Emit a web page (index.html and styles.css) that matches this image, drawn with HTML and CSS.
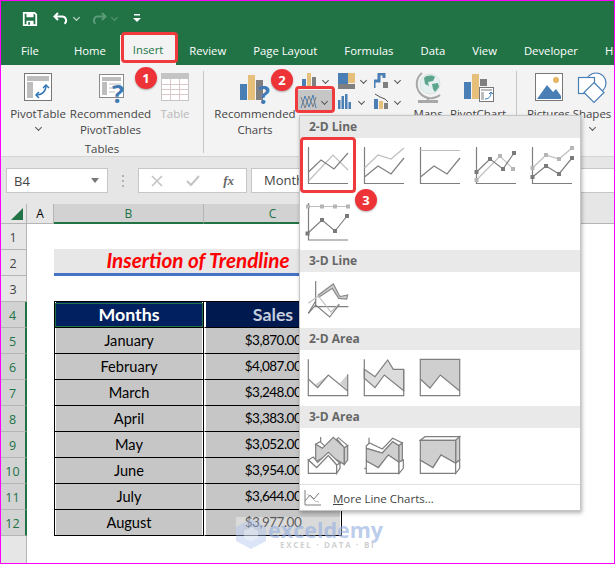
FILE: index.html
```html
<!DOCTYPE html>
<html lang="en">
<head>
  <meta charset="UTF-8" />
  <title>Insert Line Chart - Excel</title>
  <link rel="stylesheet" href="styles.css">
</head>
<body>
  <!-- title bar and tabs -->
  <header class="titlebar">
    <div class="qat">
      <svg class="qat-save" width="16" height="16" viewBox="0 0 18 18"><path d="M2 2h12l2 2v12H2z" fill="none" stroke="#fff" stroke-width="2"/><rect x="5" y="2" width="8" height="5" fill="#fff"/><rect x="5" y="11" width="8" height="5" fill="#fff"/><rect x="7" y="12.500" width="2" height="3" fill="#217346"/></svg>
      <svg class="qat-undo" width="16" height="16" viewBox="0 0 16 16"><path d="M5 2 1.500 5.500 5 9M2 5.500h7a4 4 0 0 1 2.500 7.200" fill="none" stroke="#fff" stroke-width="2"/></svg>
      <span class="chev chev-white qat-chev"></span>
      <svg class="qat-redo" width="16" height="16" viewBox="0 0 16 16"><path d="M11 2l3.500 3.500L11 9M14 5.500H7a4 4 0 0 0-2.500 7.200" fill="none" stroke="#5b9a78" stroke-width="2"/></svg>
      <span class="chev chev-dim qat-chev"></span>
      <svg class="qat-more" width="8" height="9" viewBox="0 0 8 9"><rect x="1" y="0" width="6" height="1.500" fill="#fff"/><path d="M0 4h8L4 8z" fill="#fff"/></svg>
    </div>
    <nav class="tabs">
      <span class="tab tab-file">File</span>
      <span class="tab">Home</span>
      <span class="tab tab-active">Insert</span>
      <span class="tab">Review</span>
      <span class="tab">Page Layout</span>
      <span class="tab">Formulas</span>
      <span class="tab">Data</span>
      <span class="tab">View</span>
      <span class="tab">Developer</span>
      <span class="tab">H</span>
    </nav>
  </header>

  <!-- ribbon -->
  <section class="ribbon">
    <div class="group group-tables">
      <div class="btn btn-pivot">
        <svg class="big" width="28" height="28" viewBox="0 0 28 28"><rect x=".5" y=".5" width="27" height="27" fill="#fff" stroke="#777"/><rect x="3" y="3" width="22" height="5" fill="#bdbdbd"/><rect x="3" y="9" width="6" height="16" fill="#bdbdbd"/><path d="M13 22c5 0 9-4 9-9" fill="none" stroke="#2f75b5" stroke-width="1.500"/><path d="M19 15l3-3 3 3M15 19l-3 3 3 3" fill="none" stroke="#2f75b5" stroke-width="1.500"/></svg>
        <span>PivotTable</span>
        <span class="chev btn-chev"></span>
      </div>
      <div class="btn btn-recpivot">
        <svg class="big" width="30" height="30" viewBox="0 0 30 30"><rect x=".5" y=".5" width="24" height="23" fill="#fff" stroke="#8a8a8a"/><rect x="3" y="3" width="19" height="4" fill="#bdbdbd"/><rect x="3" y="8" width="5" height="13" fill="#bdbdbd"/><path d="M10 10h12M10 14h8M10 18h6" stroke="#bdbdbd"/><text x="13" y="29" class="qmark">?</text></svg>
        <span>Recommended</span>
        <span>PivotTables</span>
      </div>
      <div class="btn btn-table">
        <svg class="big" width="28" height="28" viewBox="0 0 28 28"><rect x=".5" y=".5" width="27" height="27" fill="#fff" stroke="#c4c4c4"/><rect x="1" y="1" width="26" height="5" fill="#c4c4c4"/><path d="M1 11.500h26M1 16.500h26M1 21.500h26M9.500 6v21M18.500 6v21" stroke="#dcc8c8"/></svg>
        <span class="disabled">Table</span>
      </div>
      <div class="group-label">Tables</div>
    </div>

    <div class="group group-charts">
      <div class="btn btn-reccharts">
        <svg class="big" width="36" height="30" viewBox="0 0 36 30"><rect x="0" y="10" width="7" height="16" fill="#4a7fb5"/><rect x="8" y="1" width="7" height="25" fill="#e6c07b"/><rect x="16" y="6" width="7" height="20" fill="#7f7f7f"/><text x="18" y="30" class="qmark">?</text></svg>
        <span>Recommended</span>
        <span>Charts</span>
      </div>
      <div class="mini-grid">
        <div class="mini"><svg width="15" height="15" viewBox="0 0 15 15"><rect x="0" y="6" width="4" height="9" fill="#4a7fb5"/><rect x="5" y="0" width="4" height="15" fill="#e6c07b"/><rect x="10" y="4" width="4" height="11" fill="#7f7f7f"/></svg><span class="chev"></span></div>
        <div class="mini"><svg width="17" height="16" viewBox="0 0 17 16"><rect x="0" y="0" width="10" height="16" fill="#4a7fb5"/><rect x="10" y="0" width="7" height="10" fill="#e6c07b"/><rect x="0" y="11" width="17" height="5" fill="#7f7f7f"/></svg><span class="chev"></span></div>
        <div class="mini"><svg width="15" height="15" viewBox="0 0 15 15"><path d="M0 15V8h5V1h5v4" fill="none" stroke="#4a7fb5" stroke-width="3"/><rect x="9" y="9" width="5" height="6" fill="#7f7f7f"/></svg><span class="chev"></span></div>
        <div class="mini mini-line"><svg width="17" height="15" viewBox="0 0 17 15"><path d="M1 14 5 2l4 11 4-12 3 13" fill="none" stroke="#4a7fb5"/><path d="M1 3l4 11 4-12 4 11 3-10" fill="none" stroke="#7f7f7f"/></svg><span class="chev"></span></div>
        <div class="mini"><svg width="15" height="15" viewBox="0 0 15 15"><rect x="0" y="6" width="2.500" height="9" fill="#4a7fb5"/><rect x="3.500" y="2" width="2.500" height="13" fill="#4a7fb5"/><rect x="7" y="0" width="2.500" height="15" fill="#4a7fb5"/><rect x="10.500" y="8" width="2.500" height="7" fill="#4a7fb5"/></svg><span class="chev"></span></div>
        <div class="mini"><svg width="15" height="16" viewBox="0 0 15 16"><rect x="0" y="6" width="4" height="10" fill="#4a7fb5"/><rect x="5" y="8" width="4" height="8" fill="#e6c07b"/><rect x="10" y="10" width="4" height="6" fill="#7f7f7f"/><path d="M1 1l5 3 5 2 3 3" fill="none" stroke="#555"/></svg><span class="chev"></span></div>
      </div>
      <div class="btn btn-maps">
        <svg class="big" width="28" height="41" viewBox="0 0 28 41"><circle cx="16" cy="12" r="10" fill="#e6efef" stroke="#c9d6d6" stroke-width=".6"/><path d="M10 6c3-3 8-3 11-1l-2 4-5 1 1 4-4-2zM18 12l6-1 1 4-4 5-2-3z" fill="#5ba58c"/><path d="M8 1A14 14 0 0 0 26 23" fill="none" stroke="#a8a8a8" stroke-width="2"/><path d="M14 25v3" stroke="#a8a8a8" stroke-width="2"/><rect x="4" y="28" width="20" height="3" fill="#a8a8a8"/></svg>
        <span>Maps</span>
      </div>
      <div class="btn btn-pivotchart">
        <svg class="big" width="32" height="28" viewBox="0 0 32 28"><rect x="2" y="8" width="7" height="17" fill="#4a7fb5"/><rect x="10" y="0" width="7" height="25" fill="#e6c07b"/><rect x="18" y="5" width="7" height="7" fill="#7f7f7f"/><rect x="17.500" y="13.500" width="14" height="14" fill="#fff" stroke="#777"/><rect x="19" y="15" width="11" height="2" fill="#bdbdbd"/><rect x="19" y="18" width="3" height="8" fill="#bdbdbd"/><path d="M23 25c3 0 6-2 6-6M27 20l2-2 2 2" fill="none" stroke="#2f75b5"/></svg>
        <span>PivotChart</span>
      </div>
    </div>

    <div class="group group-illus">
      <div class="btn btn-pictures">
        <svg class="big" width="28" height="28" viewBox="0 0 28 28"><rect x=".5" y=".5" width="27" height="27" fill="#fff" stroke="#777"/><circle cx="21" cy="7" r="3" fill="#e6b566"/><path d="M2 26 12 12l6 7 3-3 5 7v3z" fill="#4a7fb5"/></svg>
        <span>Pictures</span>
      </div>
      <div class="btn btn-shapes">
        <svg class="big" width="32" height="32" viewBox="0 0 32 32"><circle cx="20" cy="11" r="10" fill="#fff" stroke="#4a7fb5" stroke-width="1.200"/><rect x="2.500" y="5.500" width="16" height="16" fill="#fff" stroke="#4a7fb5" stroke-width="1.200"/><path d="M18 10.500l10 10-10 10-10-10z" fill="#fff" stroke="#4a7fb5" stroke-width="1.200"/></svg>
        <span>Shapes</span>
        <span class="chev btn-chev"></span>
      </div>
    </div>
  </section>

  <!-- formula bar -->
  <section class="formula">
    <div class="namebox"><span>B4</span><i class="tri"></i></div>
    <div class="dots"></div>
    <div class="fx-btns">
      <svg width="12" height="12" viewBox="0 0 12 12"><path d="M1 1l10 10M11 1 1 11" stroke="#c4c4c4" stroke-width="1.600"/></svg>
      <svg width="14" height="12" viewBox="0 0 14 12"><path d="M1 6l4 4 8-9" fill="none" stroke="#c4c4c4" stroke-width="2"/></svg>
      <span class="fx">fx</span>
    </div>
    <div class="fx-input">Months</div>
  </section>

  <!-- sheet -->
  <main class="sheet">
    <div class="corner"><i class="corner-tri"></i></div>
    <div class="col">A</div>
    <div class="col col-sel">B</div>
    <div class="col col-sel col-c">C</div>
    <div class="col-rest"></div>

    <div class="row-no">1</div><div class="span-row"></div>

    <div class="row-no">2</div><div></div>
    <div class="title-cell">Insertion of Trendline</div><div></div>

    <div class="row-no">3</div><div></div><div class="above"></div><div class="above"></div><div></div>

    <div class="row-no sel">4</div><div></div>
    <div class="cell b head active">Months</div><div class="cell c head head-c">Sales</div><div></div>

    <div class="row-no sel">5</div><div></div><div class="cell b">January</div><div class="cell c">$3,870.00</div><div></div>
    <div class="row-no sel">6</div><div></div><div class="cell b">February</div><div class="cell c">$4,087.00</div><div></div>
    <div class="row-no sel">7</div><div></div><div class="cell b">March</div><div class="cell c">$3,248.00</div><div></div>
    <div class="row-no sel">8</div><div></div><div class="cell b">April</div><div class="cell c">$3,383.00</div><div></div>
    <div class="row-no sel">9</div><div></div><div class="cell b">May</div><div class="cell c">$3,052.00</div><div></div>
    <div class="row-no sel">10</div><div></div><div class="cell b">June</div><div class="cell c">$3,954.00</div><div></div>
    <div class="row-no sel">11</div><div></div><div class="cell b">July</div><div class="cell c">$3,644.00</div><div></div>
    <div class="row-no sel">12</div><div></div><div class="cell b">August</div><div class="cell c">$3,977.00</div><div></div>
    <div class="row-no"></div>
  </main>

  <!-- watermark -->
  <div class="wm-fade"></div>
  <div class="watermark">
    <svg width="30" height="30" viewBox="0 0 30 30"><path d="M15 0l15 8v14l-15 8-15-8V8z" fill="rgba(165,190,235,.4)"/><path d="M15 8l7 4v7l-7 4-7-4v-7z" fill="rgba(255,255,255,.35)"/></svg>
    <div class="wm-text">
      <b>exceldemy</b>
      <small>EXCEL · DATA · BI</small>
    </div>
  </div>

  <!-- line chart dropdown -->
  <div class="dropdown">
    <h4>2-D Line</h4>
    <div class="gallery">
      <svg viewBox="0 0 56 56"><path class="ax" d="M8.500 9v36.500H48"/><path class="lt" d="M8.500 43 33 17l15 15"/><path class="dk" d="M8.500 34 21 22l13 9 14-16"/></svg>
      <svg viewBox="0 0 56 56"><path class="ax" d="M8.500 9v36.500H48"/><path class="lt" d="M8.500 30 22 17l13 4 13-11"/><path class="dk" d="M8.500 39 22 28l13 8 13-16"/></svg>
      <svg viewBox="0 0 56 56"><path class="ax" d="M8.500 9v36.500H48"/><path class="lt" d="M8.500 12.500H48"/><path class="dk" d="M8.500 39 22 28l13 8 13-16"/></svg>
      <svg viewBox="0 0 56 56"><path class="ax" d="M8.500 9v36.500H48"/><path class="lt" d="M8.500 42 32 18l13 13"/><path class="dk" d="M8.500 34 22 21l13 10 11-16"/><g class="mk-lt"><rect x="6.500" y="40" width="4" height="4"/><rect x="30" y="16" width="4" height="4"/><rect x="43" y="29" width="4" height="4"/></g><g class="mk-dk"><rect x="6.500" y="32" width="4" height="4"/><rect x="20" y="19" width="4" height="4"/><rect x="33" y="29" width="4" height="4"/><rect x="44" y="13" width="4" height="4"/></g></svg>
      <svg viewBox="0 0 56 56"><path class="ax" d="M8.500 9v36.500H48"/><path class="lt" d="M8.500 30 22 17l13 4 13-11"/><path class="dk" d="M8.500 39 22 28l13 8 13-16"/><g class="mk-lt"><rect x="6.500" y="28" width="4" height="4"/><rect x="20" y="15" width="4" height="4"/><rect x="33" y="19" width="4" height="4"/><rect x="46" y="8" width="4" height="4"/></g><g class="mk-dk"><rect x="6.500" y="37" width="4" height="4"/><rect x="20" y="26" width="4" height="4"/><rect x="33" y="34" width="4" height="4"/><rect x="46" y="18" width="4" height="4"/></g></svg>
      <svg viewBox="0 0 56 56"><path class="ax" d="M8.500 9v37H48"/><path class="lt" d="M8.500 12.500H48"/><path class="dk" d="M7.500 39.500 22 26l13 11 12-15"/><g class="mk-lt"><rect x="6" y="10.500" width="4" height="4"/><rect x="20" y="10.500" width="4" height="4"/><rect x="33" y="10.500" width="4" height="4"/><rect x="46" y="10.500" width="4" height="4"/></g><g class="mk-dk"><rect x="5.500" y="37.500" width="4" height="4"/><rect x="20" y="24" width="4" height="4"/><rect x="33" y="35" width="4" height="4"/><rect x="45" y="20" width="4" height="4"/></g></svg>
    </div>
    <h4>3-D Line</h4>
    <div class="gallery">
      <svg viewBox="15 471 168 168" class="three"><path class="ax" d="M62 498v77h98M62 558l-22 37"/><path d="M70 540l45-33 20 38 23-5-3 12-24-2-19-30-40 26z" fill="#cfcfcf" stroke="#8a8a8a"/><path class="lt" d="M40 565l30-22 38 48 25-24"/><path class="dk" d="M40 595l22-25 42 36 29-38"/></svg>
    </div>
    <h4>2-D Area</h4>
    <div class="gallery">
      <svg viewBox="0 0 56 56"><path d="M14.300 35 28.300 25 17.700 37.700zM40 33.300l7.700-9V40z" fill="#cfcfcf"/><path class="ax" d="M8.300 9.300v36.400h39.400V24.300"/><path class="dk" d="M8.300 29l9.400 8.700L28.300 25l19.400 16"/></svg>
      <svg viewBox="0 0 56 56"><path d="M8.300 19.300 19 26.700 31.700 10l5.600 9.300h10.400v21.400L28.300 25 19 37.700 8.300 28.300z" fill="#dcdcdc" stroke="#7f7f7f"/><path class="ax" d="M8.300 9.300v36.400h39.400V19.300"/></svg>
      <svg viewBox="0 0 56 56"><path d="M8.300 9.300h39.400v31.400L28.300 25 18 38 8.300 29z" fill="#cfcfcf"/><path class="ax" d="M8.300 9.300h39.400v36.400H8.300z"/><path class="dk" d="M8.300 29 18 38 28.300 25l19.400 16"/></svg>
    </div>
    <h4>3-D Area</h4>
    <div class="gallery">
      <svg viewBox="15 309 168 168" class="three">
        <path class="ax" d="M77 336v16"/>
        <path class="face" d="M62 358l13-8 20 18 35-30 28 24-10 6-20-23-33 33-20-12z"/>
        <path class="grey" d="M62 358l20 12 33-33 33 31v50l-48-28-38 20z"/>
        <path class="grey" d="M148 368l10-6v43l-10 13z"/>
        <path class="face" d="M40 405l15-9 13 16 32-30 35 33-10 5-25-28-35 36z"/>
        <path class="face" d="M40 405l25 23 35-36 25 28v25H40z"/>
        <path class="face" d="M125 420l10-5v15l-10 15z"/>
      </svg>
      <svg viewBox="183 309 168 168" class="three">
        <path class="ax" d="M222 338v20M208 432l6-4"/>
        <path class="face" d="M214 362l10-8 38 18 31-32 29 14-10 8-19-12-31 34-48-14z"/>
        <path class="grey" d="M214 370l48 14 31-34 19 12v50l-32-22-30 38-36-20z"/>
        <path class="grey" d="M312 362l10-8v51l-10 8z"/>
        <path class="face" d="M214 408l36 20 30-38 32 22v33h-98z"/>
        <path class="face" d="M312 412l13-7v25l-13 15z"/>
      </svg>
      <svg viewBox="351 309 168 168" class="three">
        <path class="face" d="M376 346l14-11h104l-12 11z"/>
        <path class="grey" d="M482 346l12-11v70l-12 10z"/>
        <path class="grey" d="M376 346h106v69l-44-25-24 38-38-22z"/>
        <path class="face" d="M376 406l38 22 24-38 44 25v30H376z"/>
        <path class="face" d="M482 415l12-10v25l-12 15z"/>
      </svg>
    </div>
    <div class="more">
      <svg width="17" height="16" viewBox="0 0 17 16"><path d="M1 0v15h16" fill="none" stroke="#7f7f7f"/><path d="M1 11l5-6 4 4 5-6" fill="none" stroke="#7f7f7f"/><path d="M3 4l5 4 3 3 4 1" fill="none" stroke="#bfbfbf"/></svg>
      <span><u>M</u>ore Line Charts...</span>
    </div>
  </div>

  <!-- red callouts -->
  <div class="mark mark-tab"></div>
  <div class="mark mark-btn"></div>
  <div class="mark mark-chart"></div>
  <div class="badge badge-1">1</div>
  <div class="badge badge-2">2</div>
  <div class="badge badge-3">3</div>

  <div class="edge"></div>
</body>
</html>
```

FILE: styles.css
```css
* { box-sizing: border-box; }

body {
  margin: 0;
  width: 615px; height: 564px;
  position: relative;
  overflow: hidden;
  background: #fff;
  font-family: "Open Sans", Arial, sans-serif;
  font-size: 11.500px;
  color: #444;
}
.edge {
  position: absolute; top: 0; left: 0; right: 0; bottom: 0;
  border: 1px solid #f0f;
}

/* title bar */
.titlebar {
  background: #217346;
  height: 65px;
  color: #fff;
  overflow: hidden;
}
.qat {
  height: 35px;
  display: flex;
  align-items: center;
  padding: 2px 0 0 22px;
}
.qat-undo { margin-left: 15px; }
.qat-chev { margin: 0 0 3px 5px; }
.qat-redo { margin-left: 12px; }
.qat-more { margin-left: 16px; }
.tabs {
  height: 30px;
  display: flex;
  gap: 27px;
  padding-left: 21px;
  align-items: center;
  white-space: nowrap;
  font-size: 11.300px;
}
.tab-file { margin-right: 8px; }
.tab-active {
  color: #217346;
  background: #f3f3f3;
  height: 30px;
  line-height: 30px;
  margin: 0 -14px 0 -13px;
  padding: 0 13px;
}

/* ribbon */
.ribbon {
  height: 92px;
  background: #f3f3f3;
  border-bottom: 1px solid #d4d4d4;
  display: flex;
  padding-top: 6px;
}
.group {
  position: relative;
  display: flex;
  height: 82px;
  border-right: 1px solid #c6c6c6;
}
.group-tables { width: 204px; padding-left: 6px; }
.group-charts { width: 313px; padding-left: 9px; }
.group-illus { border-right: none; padding-left: 8px; }
.group-label {
  position: absolute; left: 0; width: 204px; top: 70px;
  text-align: center;
  line-height: 16px;
}
.btn {
  display: flex;
  flex-direction: column;
  align-items: center;
  line-height: 16px;
  white-space: nowrap;
}
.big { flex: none; height: auto; overflow: visible; }
.btn-pivot { width: 64px; }
.btn-recpivot { width: 81px; }
.btn-table { width: 48px; }
.btn-reccharts { width: 84px; }
.btn-maps { width: 46px; }
.btn-pivotchart { width: 54px; }
.btn-pictures { width: 47px; }
.btn-shapes { width: 40px; }
.btn-pivot .big, .btn-table .big, .btn-pictures .big { margin: 2px 0 5px; }
.btn-recpivot .big { margin: 3px 0 2px 6px; }
.btn-reccharts .big { margin: 3px 0 2px 6px; }
.btn-maps .big { margin: 1px 0 -7px; }
.btn-pivotchart .big { margin: 3px 0 4px; }
.btn-shapes .big { margin: 1px 0 2px; }
.btn-chev { margin-top: 3px; }
.disabled { color: #b8b8b8; }
.qmark {
  font: bold 25px "Open Sans", Arial, sans-serif;
  fill: #3f7ab5;
}
.mini-grid {
  display: grid;
  grid-template-columns: 36px 36px 36px;
  grid-template-rows: 19px 22px;
  width: 108px;
  height: 41px;
}
.mini {
  display: flex;
  align-items: center;
  gap: 6px;
  padding-left: 5px;
}
.mini-line {
  background: #c6c6c6;
  gap: 5px;
  padding-left: 3px;
}
.chev {
  display: inline-block;
  width: 5px; height: 5px;
  border-right: 1px solid #555;
  border-bottom: 1px solid #555;
  transform: rotate(45deg);
}
.chev-white { border-color: #d7e6dd; }
.chev-dim { border-color: #5b9a78; }

/* formula bar */
.formula {
  height: 47px;
  background: #e6e6e6;
  display: flex;
  align-items: center;
  padding: 0 0 0 6px;
}
.namebox {
  width: 102px; height: 25px;
  background: #fff;
  border: 1px solid #c6c6c6;
  display: flex;
  align-items: center;
  justify-content: space-between;
  padding: 0 8px 0 7px;
  font-size: 13px;
}
.tri {
  border: 4px solid transparent;
  border-top: 5px solid #777;
  border-bottom: none;
}
.dots {
  width: 2px; height: 12px;
  margin: 0 14px;
  background: repeating-linear-gradient(#b0b0b0 0 2px, transparent 2px 5px);
}
.fx-btns {
  width: 109px; height: 25px;
  background: #fff;
  border: 1px solid #c6c6c6;
  display: flex;
  align-items: center;
  justify-content: space-between;
  padding: 0 12px;
}
.fx {
  font: italic bold 13px "Liberation Serif", serif;
  color: #666;
}
.fx-input {
  flex: 1;
  height: 25px;
  margin-left: 4px;
  background: #fff;
  border: 1px solid #c6c6c6;
  padding-left: 12px;
  line-height: 23px;
  font-size: 13px;
}

/* sheet */
.sheet {
  height: 360px;
  display: grid;
  grid-template-columns: 27px 27px 150px 138px 1fr;
  grid-template-rows: 20px repeat(12, 26px) 1fr;
  font-family: Lato, "Liberation Sans", sans-serif;
  font-size: 14.600px;
  color: #000;
}
.corner, .col, .col-rest, .row-no { background: #e6e6e6; }
.corner {
  position: relative;
  border-right: 1px solid #b5b5b5;
  border-bottom: 1px solid #b5b5b5;
}
.corner-tri {
  position: absolute; right: 3px; bottom: 3px;
  border-style: solid;
  border-width: 0 0 12px 12px;
  border-color: transparent transparent #217346 transparent;
}
.col {
  font-family: "Open Sans", Arial, sans-serif;
  font-size: 12px;
  text-align: center;
  line-height: 19px;
  border-right: 1px solid #b5b5b5;
  border-bottom: 1px solid #b5b5b5;
}
.col-sel {
  background: #d2d2d2;
  color: #217346;
  border-bottom: 2px solid #217346;
}
.col-rest { border-bottom: 1px solid #b5b5b5; }
.row-no {
  font-family: "Open Sans", Arial, sans-serif;
  font-size: 12.500px;
  color: #444;
  text-align: center;
  line-height: 28px;
  border-right: 1px solid #b5b5b5;
  border-bottom: 1px solid #b5b5b5;
}
.row-no.sel {
  background: #d2d2d2;
  color: #217346;
  border-right: 2px solid #217346;
}
.span-row { grid-column: 2 / -1; }
.title-cell {
  grid-column: 3 / 5;
  height: 27px;
  margin-top: -1px;
  background: #e7e7e7;
  border-bottom: 3px solid #4472c4;
  font: italic bold 20.700px Lato, Arial, sans-serif;
  color: #f00;
  text-align: center;
  line-height: 23px;
}
.above { border-bottom: 1px solid #000; }
.cell {
  background-color: #c6c6c6;
  background-clip: content-box;
  padding: 0 1px;
  border-bottom: 1px solid #000;
  border-right: 1px solid #000;
  line-height: 25px;
  text-align: center;
}
.b { border-left: 1px solid #000; }
.c {
  border-left: 1px solid #fff;
  font-size: 13.500px;
  letter-spacing: -.5px;
}
.head {
  background-color: #002060;
  color: #fff;
  font-weight: bold;
  font-size: 17.800px;
  letter-spacing: 0;
}
.head-c {
  background-color: #001a4f;
  color: #c5cede;
}
.active {
  position: relative;
  outline: 1px solid #217346;
  outline-offset: -2px;
}

/* watermark */
.wm-fade {
  position: absolute; left: 236px; top: 517px;
  width: 105px; height: 18px;
  background: rgba(255, 255, 255, .35);
}
.watermark {
  position: absolute; left: 236px; top: 519px;
  display: flex;
  gap: 2px;
  align-items: flex-start;
}
.wm-text {
  display: flex;
  flex-direction: column;
  font-family: "Open Sans", Arial, sans-serif;
}
.wm-text b {
  font-size: 21.500px;
  line-height: 21px;
  color: rgba(150, 175, 225, .65);
}
.wm-text small {
  font-size: 8px;
  line-height: 9px;
  letter-spacing: 1.700px;
  color: #d0d0d0;
  font-weight: bold;
  padding-left: 12px;
}

/* dropdown */
.dropdown {
  position: absolute; left: 299px; top: 115px;
  width: 282px; height: 396px;
  background: #fff;
  border: 1px solid #c6c6c6;
  box-shadow: 1px 2px 4px rgba(0,0,0,0.3);
}
.dropdown h4 {
  margin: 0;
  height: 22px;
  background: #e9e9e9;
  color: #666;
  font-size: 12px;
  font-weight: bold;
  line-height: 22px;
  padding-left: 9px;
}
.gallery {
  display: grid;
  grid-template-columns: repeat(5, 56px);
  grid-auto-rows: 56px;
}
.gallery svg {
  width: 56px; height: 56px;
  fill: none;
  stroke-width: 1.200;
}
.gallery svg.three { stroke-width: 3.600; }
.ax { stroke: #7f7f7f; fill: none; }
.dk { stroke: #7f7f7f; fill: none; }
.lt { stroke: #bfbfbf; fill: none; }
.face { fill: #fff; stroke: #7f7f7f; }
.grey { fill: #cfcfcf; stroke: #7f7f7f; }
.mk-lt rect { fill: #b5b5b5; stroke: none; }
.mk-dk rect { fill: #7a7a7a; stroke: none; }
.more {
  border-top: 1px solid #e0e0e0;
  height: 27px;
  display: flex;
  align-items: center;
  padding-left: 4px;
  gap: 12px;
}
.more svg { flex: none; }

/* red callouts */
.mark {
  position: absolute;
  border: 3px solid #ef3b3e;
  border-radius: 4px;
}
.mark-tab { left: 121px; top: 32px; width: 57px; height: 31px; }
.mark-btn { left: 295px; top: 86px; width: 40px; height: 27px; }
.mark-chart { left: 300px; top: 137px; width: 56px; height: 56px; }
.badge {
  position: absolute;
  width: 22px; height: 22px;
  border-radius: 50%;
  background: #ee3338;
  box-shadow: 0 1px 2px rgba(0,0,0,.3);
  color: #fff;
  font-weight: bold;
  font-size: 13px;
  line-height: 22px;
  text-align: center;
}
.badge-1 { left: 135px; top: 67px; }
.badge-2 { left: 271px; top: 69px; }
.badge-3 { left: 355px; top: 189px; }
```
